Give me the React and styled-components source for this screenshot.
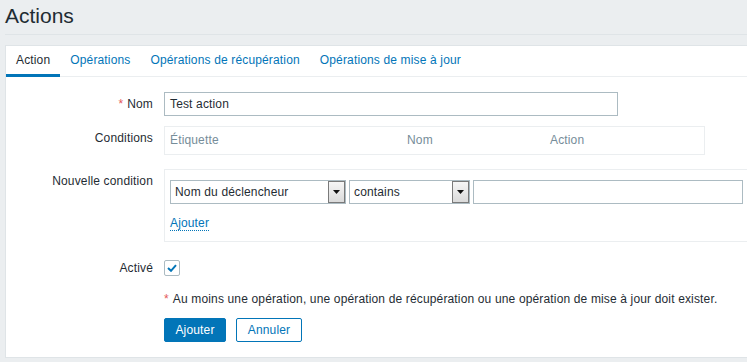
import React from "react";
import styled, { createGlobalStyle } from "styled-components";

const GlobalStyle = createGlobalStyle`
  html, body {
    margin: 0;
    padding: 0;
    background: #ebeef0;
    overflow: hidden;
  }
  body {
    font-family: "Liberation Sans", Arial, sans-serif;
    font-size: 12px;
    letter-spacing: 0.15px;
    color: #1f2c33;
  }
  * { box-sizing: border-box; }
`;

const Page = styled.div`
  padding-left: 5px;
  width: 820px;
`;

const Header = styled.header`
  padding: 4px 0 6px;
  border-bottom: 1px solid #dfe4e7;
`;

const Title = styled.h1`
  margin: 0;
  font-size: 21px;
  line-height: 24px;
  font-weight: normal;
  letter-spacing: 0;
  color: #1f2c33;
`;

const Panel = styled.section`
  margin-top: 10px;
  background: #ffffff;
  border: 1px solid #dfe4e7;
  padding-bottom: 15px;
`;

const TabList = styled.nav`
  display: flex;
  border-bottom: 1px solid #ebeef0;
`;

const Tab = styled.span`
  padding: 7px 10px 7px;
  line-height: 14px;
  margin-bottom: -1px;
  border-bottom: 3px solid ${(p) => (p.$active ? "#0275b8" : "transparent")};
  color: ${(p) => (p.$active ? "#1f2c33" : "#0275b8")};
  white-space: nowrap;
`;

const Form = styled.div`
  padding-top: 15px;
  display: flex;
  flex-direction: column;
`;

const Row = styled.div`
  display: grid;
  grid-template-columns: 147px 1fr;
  column-gap: 11px;
  margin-top: ${(p) => p.$gap || 0}px;
`;

const Label = styled.div`
  text-align: right;
  line-height: 24px;
  white-space: nowrap;
`;

const Req = styled.span`
  color: #e45959;
  margin-right: 4px;
`;

const TextInput = styled.div`
  width: ${(p) => p.$w}px;
  height: 24px;
  border: 1px solid #acbbc2;
  background: #fff;
  padding: 0 5px;
  line-height: 22px;
  color: #1f2c33;
`;

const CondTable = styled.div`
  width: 541px;
  border: 1px solid #ebeef0;
  display: grid;
  grid-template-columns: 237px 143px 1fr;
`;

const CondHead = styled.div`
  line-height: 27px;
  padding: 0 5px;
  color: #768d99;
`;

const NewCondBox = styled.div`
  width: 620px;
  border: 1px solid #ebeef0;
  padding: 10px 5px 9px;
`;

const Controls = styled.div`
  display: flex;
  gap: 3px;
`;

const Select = styled.div`
  width: ${(p) => p.$w}px;
  height: 24px;
  border: 1px solid #acbbc2;
  background: #fff;
  display: flex;
  align-items: stretch;
`;

const SelectText = styled.span`
  flex: 1;
  padding-left: 4px;
  line-height: 22px;
  color: #1f2c33;
  white-space: nowrap;
  overflow: hidden;
`;

const ArrowBtn = styled.span`
  width: 17px;
  border: 1px solid #7a7a7a;
  background: linear-gradient(#f6f6f6, #dadada);
  display: flex;
  align-items: center;
  justify-content: center;
`;

const LinkLine = styled.div`
  margin-top: 10px;
  line-height: 18px;
`;

const Link = styled.a`
  color: #0275b8;
  text-decoration: none;
  border-bottom: 1px dotted #0275b8;
`;

const CheckRow = styled.div`
  height: 24px;
  display: flex;
  align-items: center;
`;

const Checkbox = styled.span`
  width: 16px;
  height: 16px;
  border: 1px solid #acbbc2;
  border-radius: 2px;
  background: #fff;
  display: flex;
  align-items: center;
  justify-content: center;
`;

const Note = styled.div`
  line-height: 24px;
  white-space: nowrap;
`;

const Buttons = styled.div`
  display: flex;
  gap: 10px;
`;

const Button = styled.button`
  width: ${(p) => p.$w}px;
  height: 24px;
  padding: 0;
  border-radius: 2px;
  font-family: "Liberation Sans", Arial, sans-serif;
  font-size: 12px;
  letter-spacing: 0.15px;
  border: 1px solid #0275b8;
  background: ${(p) => (p.$primary ? "#0275b8" : "#ffffff")};
  color: ${(p) => (p.$primary ? "#ffffff" : "#0275b8")};
`;

const Arrow = () => (
  <svg width="7" height="4" viewBox="0 0 7 4">
    <path d="M0 0 H7 L3.5 4 Z" fill="#111" />
  </svg>
);

export default function App() {
  return (
    <>
      <GlobalStyle />
      <Page>
        <Header>
          <Title>Actions</Title>
        </Header>
        <Panel>
          <TabList>
            <Tab $active>Action</Tab>
            <Tab>Opérations</Tab>
            <Tab>Opérations de récupération</Tab>
            <Tab>Opérations de mise à jour</Tab>
          </TabList>
          <Form>
            <Row>
              <Label>
                <Req>*</Req>Nom
              </Label>
              <TextInput $w={454}>Test action</TextInput>
            </Row>
            <Row $gap={10}>
              <Label>Conditions</Label>
              <CondTable>
                <CondHead>Étiquette</CondHead>
                <CondHead>Nom</CondHead>
                <CondHead>Action</CondHead>
              </CondTable>
            </Row>
            <Row $gap={14}>
              <Label>Nouvelle condition</Label>
              <NewCondBox>
                <Controls>
                  <Select $w={176}>
                    <SelectText>Nom du déclencheur</SelectText>
                    <ArrowBtn>
                      <Arrow />
                    </ArrowBtn>
                  </Select>
                  <Select $w={121}>
                    <SelectText>contains</SelectText>
                    <ArrowBtn>
                      <Arrow />
                    </ArrowBtn>
                  </Select>
                  <TextInput $w={270} />
                </Controls>
                <LinkLine>
                  <Link>Ajouter</Link>
                </LinkLine>
              </NewCondBox>
            </Row>
            <Row $gap={14}>
              <Label>Activé</Label>
              <CheckRow>
                <Checkbox>
                  <svg width="10" height="8" viewBox="0 0 10 8">
                    <path
                      d="M1 4 L4 6.8 L9 1.2"
                      fill="none"
                      stroke="#0275b8"
                      strokeWidth="2"
                    />
                  </svg>
                </Checkbox>
              </CheckRow>
            </Row>
            <Row $gap={7}>
              <div />
              <Note>
                <Req>*</Req>Au moins une opération, une opération de récupération ou une
                opération de mise à jour doit exister.
              </Note>
            </Row>
            <Row $gap={7}>
              <div />
              <Buttons>
                <Button $primary $w={62}>Ajouter</Button>
                <Button $w={66}>Annuler</Button>
              </Buttons>
            </Row>
          </Form>
        </Panel>
      </Page>
    </>
  );
}
